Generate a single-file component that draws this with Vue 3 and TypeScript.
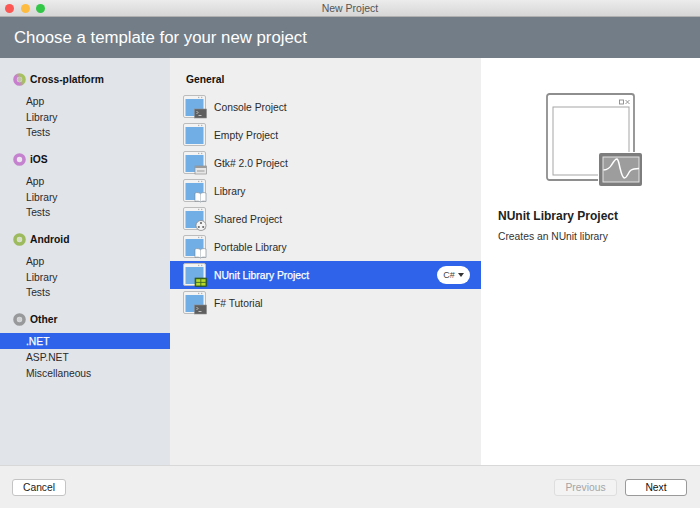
<script setup lang="ts">
interface Group { name: string; ring: string; core: string; items: string[] }
const groups: Group[] = [
  { name: 'Cross-platform', ring: 'url(#gXp)', core: '#c4c2ae', items: ['App', 'Library', 'Tests'] },
  { name: 'iOS', ring: '#c583cf', core: '#eee6f0', items: ['App', 'Library', 'Tests'] },
  { name: 'Android', ring: '#9dbb5e', core: '#d6dec4', items: ['App', 'Library', 'Tests'] },
  { name: 'Other', ring: '#98999a', core: '#d2d3d4', items: ['.NET', 'ASP.NET', 'Miscellaneous'] },
]
interface Tpl { name: string; badge: string; sel?: boolean }
const templates: Tpl[] = [
  { name: 'Console Project', badge: 'term' },
  { name: 'Empty Project', badge: '' },
  { name: 'Gtk# 2.0 Project', badge: 'gtk' },
  { name: 'Library', badge: 'book' },
  { name: 'Shared Project', badge: 'shared' },
  { name: 'Portable Library', badge: 'book' },
  { name: 'NUnit Library Project', badge: 'nunit', sel: true },
  { name: 'F# Tutorial', badge: 'term' },
]
</script>

<template>
  <div class="win">
    <div class="titlebar">
      <div class="lights">
        <span class="light red"></span>
        <span class="light amber"></span>
        <span class="light green"></span>
      </div>
      <span class="wintitle">New Project</span>
    </div>
    <div class="banner">Choose a template for your new project</div>
    <div class="main">
      <aside class="side">
        <svg width="0" height="0" class="defs">
          <defs>
            <linearGradient id="gXp" x1="0" y1="0.6" x2="1" y2="0.2">
              <stop offset="0.25" stop-color="#c77fce" />
              <stop offset="0.75" stop-color="#a5c25f" />
            </linearGradient>
          </defs>
        </svg>
        <section v-for="g in groups" :key="g.name" class="group">
          <div class="ghead">
            <svg class="dot" width="13" height="13" viewBox="0 0 13 13">
              <circle cx="6.5" cy="6.5" r="4.5" fill="none" :stroke="g.ring" stroke-width="3.6" />
              <circle cx="6.5" cy="6.5" r="2.4" :fill="g.core" />
            </svg>
            <span>{{ g.name }}</span>
          </div>
          <div v-for="it in g.items" :key="it" class="gitem" :class="{ on: it === '.NET' }">{{ it }}</div>
        </section>
      </aside>

      <div class="middle">
        <div class="mhead">General</div>
        <div v-for="t in templates" :key="t.name" class="trow" :class="{ sel: t.sel }">
          <svg class="ticon" width="24" height="24" viewBox="0 0 24 24">
            <rect x="0.5" y="0.5" width="22" height="22" rx="1.5" fill="#f3f3f3" stroke="#bcbcbc" />
            <rect x="2.5" y="4" width="18" height="17" fill="#72aee6" />
            <rect x="15" y="1.8" width="1.3" height="1.3" fill="#b5b5b5" />
            <rect x="18" y="1.8" width="1.3" height="1.3" fill="#b5b5b5" />
            <g v-if="t.badge === 'term'">
              <rect x="11.5" y="14" width="12" height="9" fill="#5f5f5f" stroke="#8d8d8d" stroke-width="0.6" />
              <path d="M13.500 16l1.500 1.500-1.500 1.500M15.500 20.500h3" fill="none" stroke="#eee" stroke-width="0.7" />
            </g>
            <g v-else-if="t.badge === 'gtk'">
              <rect x="12" y="15" width="11.500" height="8" fill="#e6e6e6" stroke="#8f8f8f" stroke-width="0.7" />
              <rect x="12" y="15" width="11.500" height="2" fill="#9a9a9a" />
              <path d="M14 20h7.500" stroke="#9a9a9a" />
            </g>
            <g v-else-if="t.badge === 'book'">
              <path d="M12 14c2-.8 4.200-.5 5.500.8 1.300-1.300 3.500-1.600 5.500-.8v8.500c-2-.7-4.200-.5-5.500.5-1.300-1-3.500-1.200-5.500-.5z" fill="#fff" stroke="#6f7f8d" stroke-width="0.6" />
              <path d="M17.500 15v8" stroke="#9aa5ae" stroke-width="0.5" />
            </g>
            <g v-else-if="t.badge === 'shared'">
              <circle cx="18" cy="18.500" r="5" fill="#f4f4f4" stroke="#7e7e7e" stroke-width="0.7" />
              <circle cx="18" cy="16" r="1.100" fill="#666" />
              <circle cx="15.800" cy="20" r="1.100" fill="#666" />
              <circle cx="20.200" cy="20" r="1.100" fill="#666" />
            </g>
            <g v-else-if="t.badge === 'nunit'">
              <rect x="12" y="15" width="11.500" height="8.500" fill="#3d6b1e" stroke="#274a12" stroke-width="0.6" />
              <rect x="13.200" y="16.200" width="4.200" height="2.700" fill="#b6d92c" />
              <rect x="18.300" y="16.200" width="4.200" height="2.700" fill="#b6d92c" />
              <rect x="13.200" y="19.800" width="4.200" height="2.700" fill="#b6d92c" />
              <rect x="18.300" y="19.800" width="4.200" height="2.700" fill="#b6d92c" />
            </g>
          </svg>
          <span class="tname">{{ t.name }}</span>
          <span v-if="t.sel" class="lang">C#<i class="caret"></i></span>
        </div>
      </div>

      <div class="detail">
        <svg class="bigicon" width="96" height="94" viewBox="0 0 96 94">
          <rect x="1" y="1" width="87" height="86" rx="2.500" fill="#fff" stroke="#8e8e8e" stroke-width="1.800" />
          <rect x="7" y="14" width="76" height="68" fill="#fff" stroke="#a5a5a5" stroke-width="1" />
          <rect x="73.500" y="7" width="4" height="4" fill="none" stroke="#8a8a8a" stroke-width="0.9" />
          <path d="M79.500 7l4 4M83.500 7l-4 4" stroke="#8a8a8a" stroke-width="0.9" />
          <rect x="52" y="59" width="44" height="35" rx="2.500" fill="#fff" />
          <rect x="53" y="60" width="43" height="33" rx="2" fill="#7d7d7d" />
          <rect x="57" y="64" width="36" height="25" fill="#9d9d9d" stroke="#e4e4e4" stroke-width="1" />
          <path d="M57.500 77c4-.3 6-1.500 8-5 2.500-4 4-6.500 5.500-6 1.500.8 1.800 4 3 9 1.300 5.500 2.500 10 4.500 10 2.500 0 3.500-5 6-7.500 2-1.500 4.500-2 8.500-2" fill="none" stroke="#fff" stroke-width="1.500" />
        </svg>
        <h2 class="dtitle">NUnit Library Project</h2>
        <p class="ddesc">Creates an NUnit library</p>
      </div>
    </div>
    <footer class="foot">
      <button class="btn cancel">Cancel</button>
      <div class="spacer"></div>
      <button class="btn prev" disabled>Previous</button>
      <button class="btn next">Next</button>
    </footer>
  </div>
</template>

<style>
html, body { margin: 0; background: #efefef; }
</style>

<style scoped>
.win {
  width: 700px;
  height: 508px;
  display: flex;
  flex-direction: column;
  overflow: hidden;
  font-family: "Liberation Sans", Arial, sans-serif;
  font-size: 10.3px;
  color: #2b2b2b;
}
.titlebar {
  height: 17px;
  position: relative;
  display: flex;
  align-items: center;
  justify-content: center;
  background: linear-gradient(#ececec, #d6d6d6);
  border-bottom: 1px solid #b0b0b0;
  box-sizing: border-box;
  flex: none;
}
.lights {
  position: absolute;
  left: 5px;
  top: 4px;
  display: flex;
  gap: 6.5px;
}
.light { width: 9px; height: 9px; border-radius: 50%; }
.red { background: #fc5753; }
.amber { background: #fdbc40; }
.green { background: #33c748; }
.wintitle { font-size: 10.5px; color: #555; }
.banner {
  height: 41px;
  flex: none;
  box-sizing: border-box;
  background: #737d87;
  color: #fff;
  font-size: 16.8px;
  line-height: 41px;
  padding-left: 14px;
}
.main { flex: 1; display: flex; min-height: 0; }
.side {
  width: 170px;
  flex: none;
  background: #e1e4e9;
  padding-top: 13px;
  box-sizing: border-box;
}
.defs { position: absolute; }
.group { height: 80px; }
.ghead {
  height: 16px;
  display: flex;
  align-items: center;
  padding-left: 13px;
  gap: 4px;
  font-size: 10.3px;
  font-weight: 700;
  color: #111;
  margin-bottom: 6px;
}
.dot { flex: none; }
.gitem {
  height: 15.5px;
  line-height: 17px;
  padding-left: 26px;
}
.group:last-child .gitem { height: 16px; }
.gitem.on { background: #2e63ea; color: #fff; -webkit-text-stroke: 0.25px #fff; }
.middle {
  width: 311px;
  flex: none;
  background: #efefef;
  padding-top: 13px;
  box-sizing: border-box;
}
.mhead {
  height: 16px;
  line-height: 17px;
  padding-left: 16px;
  font-size: 10.3px;
  font-weight: 700;
  color: #111;
  margin-bottom: 6px;
}
.trow {
  height: 28px;
  display: flex;
  align-items: center;
  padding-left: 13px;
  gap: 7px;
}
.ticon { flex: none; }
.tname { flex: 1; }
.trow.sel { background: #2e63ea; color: #fff; }
.trow.sel .tname { -webkit-text-stroke: 0.25px #fff; }
.lang {
  width: 33px;
  height: 18px;
  margin-right: 11px;
  border-radius: 9px;
  background: #fff;
  color: #444;
  font-size: 9px;
  display: flex;
  align-items: center;
  justify-content: center;
  gap: 3px;
}
.caret {
  width: 0;
  height: 0;
  border-left: 3.5px solid transparent;
  border-right: 3.5px solid transparent;
  border-top: 4px solid #333;
}
.detail {
  flex: 1;
  background: #fff;
  padding: 35px 17px 0;
  box-sizing: border-box;
}
.bigicon { display: block; margin-left: 48px; }
.dtitle {
  margin: 21px 0 0;
  font-size: 12px;
  line-height: 16px;
  font-weight: 700;
  color: #222;
}
.ddesc { margin: 5px 0 0; line-height: 16px; color: #333; }
.foot {
  height: 43px;
  flex: none;
  box-sizing: border-box;
  background: #efefef;
  border-top: 1px solid #d8d8d8;
  display: flex;
  align-items: flex-start;
  padding: 13px 13px 0 12px;
}
.spacer { flex: 1; }
.btn {
  height: 17px;
  padding: 0;
  border-radius: 3px;
  border: 1px solid #c4c4c4;
  background: #fff;
  font: inherit;
  color: #222;
  box-sizing: border-box;
}
.cancel { width: 54px; }
.prev {
  width: 63px;
  margin-right: 8px;
  background: #f3f3f3;
  border-color: #dedede;
  color: #a5a5a5;
}
.next { width: 62px; border-color: #9a9a9a; color: #111; }
</style>
